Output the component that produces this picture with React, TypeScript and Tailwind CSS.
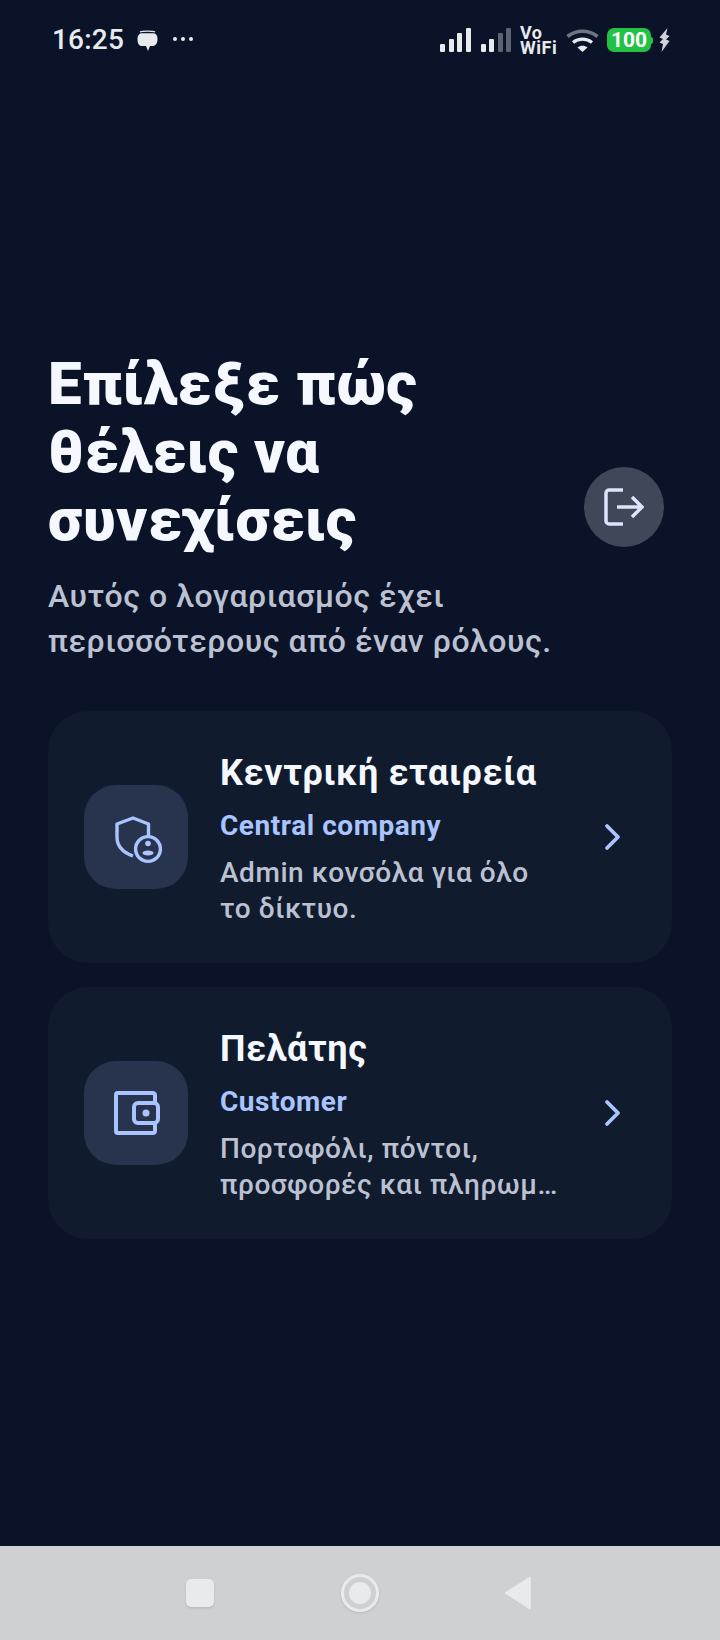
import React from 'react';

const ACCENT = '#a9c4ff';

const SignalBars = ({ dim = false }: { dim?: boolean }) => {
  const bars = [8, 13, 19, 24];
  return (
    <div className="flex items-end gap-[3.5px] h-[24px]">
      {bars.map((h, i) => (
        <div
          key={h}
          className={`w-[5px] rounded-[1px] ${dim && i > 1 ? 'bg-[#5b6270]' : 'bg-[#e8eaee]'}`}
          style={{ height: h }}
        />
      ))}
    </div>
  );
};

const StatusBar = () => (
  <div className="flex items-center justify-between h-[78px] pt-[2px] pl-[52px] pr-[50px] font-['Roboto',sans-serif] text-[#e8eaee]">
    <div className="flex items-center">
      <span className="text-[28px] leading-none font-medium tracking-[0.2px]">16:25</span>
      <svg width="21" height="21" viewBox="0 0 21 21" className="ml-[13px]">
        <path d="M3 2C5 .8 16 .8 18 2" fill="none" stroke="#e8eaee" strokeWidth="1.200" />
        <path d="M.5 9c0-4 2-5.800 4.500-5.800h11c3 0 4.500 2 4.500 5.800 0 4.500-2 7-5 7h-2.500L11 21l-2-5H5c-3 0-4.500-2.500-4.500-7z" fill="#e8eaee" />
      </svg>
      <div className="flex items-center gap-[4px] ml-[15px] mb-[2px]">
        <div className="w-[4px] h-[4px] rounded-full bg-[#e8eaee]" />
        <div className="w-[4px] h-[4px] rounded-full bg-[#e8eaee]" />
        <div className="w-[4px] h-[4px] rounded-full bg-[#e8eaee]" />
      </div>
    </div>
    <div className="flex items-center">
      <SignalBars />
      <div className="ml-[10px]">
        <SignalBars dim />
      </div>
      <div className="ml-[9px] w-[40px] text-[18px] leading-[15px] font-bold tracking-[0.5px]">
        <div>Vo</div>
        <div>WiFi</div>
      </div>
      <svg width="33" height="24" viewBox="0 0 33 24" className="ml-[6px]">
        <path d="M1.500 8.500C10 1.500 23 1.500 31.500 8.500" fill="none" stroke="#6f7683" strokeWidth="3.600" />
        <path d="M7 14.500C12.500 10 20.500 10 26 14.500" fill="none" stroke="#e8eaee" strokeWidth="3.200" />
        <path d="M11.500 19.500L16.500 24l5-4.500c-3-2.500-7-2.500-10 0z" fill="#e8eaee" />
      </svg>
      <div className="ml-[8px] flex items-center">
        <div className="w-[44px] h-[24px] rounded-[7px] bg-[#22c244] flex items-center justify-center text-white text-[21px] leading-none font-bold">
          100
        </div>
        <div className="w-[2px] h-[7px] rounded-r-[2px] bg-[#22c244]" />
      </div>
      <svg width="11" height="24" viewBox="0 0 11 24" className="ml-[6px]">
        <path d="M8.500 0L.5 9.500l3.500 1.500L.5 14.500l3.500 1.500L2.500 24l8-11-3.500-1.500L10.500 8 7 6.500z" fill="#cfd2d8" />
      </svg>
    </div>
  </div>
);

const RoleCard = ({
  icon,
  title,
  label,
  desc,
}: {
  icon: React.ReactNode;
  title: string;
  label: string;
  desc: string;
}) => (
  <div className="flex items-center h-[252px] rounded-[40px] bg-[#101b2d] pl-[36px] pr-[49px]">
    <div className="w-[104px] h-[104px] shrink-0 rounded-[32px] bg-[#28344e] flex items-center justify-center">
      {icon}
    </div>
    <div className="ml-[32px] flex-1 min-w-0 pt-[4px]">
      <div className="text-[36px] leading-[44px] font-bold text-[#f6f8ff] tracking-[0.6px]">{title}</div>
      <div className="mt-[13px] text-[28px] leading-[36px] font-bold text-[#a9c4ff] tracking-[0.55px]">{label}</div>
      <div className="mt-[11px] w-[340px] text-[28px] leading-[36px] font-medium text-[#bcc1d2] tracking-[0.55px]">
        {desc}
      </div>
    </div>
    <svg width="20" height="28" viewBox="0 0 20 28" fill="none">
      <path d="M4 3l11 11L4 25" stroke={ACCENT} strokeWidth="3.800" strokeLinecap="round" strokeLinejoin="round" />
    </svg>
  </div>
);

const ShieldIcon = () => (
  <svg width="48" height="48" viewBox="0 0 48 48" fill="none" className="ml-[5px] mt-[5px]">
    <path
      d="M33.500 20V8L18 2 2 8v13c0 9 6 15.500 16 19"
      stroke={ACCENT}
      strokeWidth="3.400"
      strokeLinejoin="round"
    />
    <circle cx="33" cy="33" r="12.400" fill="#28344e" stroke={ACCENT} strokeWidth="3.400" />
    <circle cx="33" cy="27.500" r="2.800" fill={ACCENT} />
    <ellipse cx="33" cy="37" rx="5.500" ry="2.500" fill={ACCENT} />
  </svg>
);

const WalletIcon = () => (
  <svg width="46" height="44" viewBox="0 0 46 44" fill="none" className="ml-[2px]">
    <path
      d="M41 12V4.500C41 3 40 2 38.500 2h-35C2.500 2 2 3 2 4v36c0 1 .5 2 1.500 2h35c1.500 0 2.500-1 2.500-2.500V32"
      stroke={ACCENT}
      strokeWidth="4"
    />
    <rect x="20" y="12" width="24" height="20" rx="4" stroke={ACCENT} strokeWidth="4" />
    <circle cx="32" cy="22" r="3.500" fill={ACCENT} />
  </svg>
);

export default function App() {
  return (
    <div className="w-[720px] h-[1640px] flex flex-col bg-[#0a1327] font-['Roboto',sans-serif]">
      <StatusBar />
      <div className="flex-1 pl-[48px] pr-[48px] pt-[272px]">
        <div className="flex items-end justify-between">
          <h1 className="text-[60px] leading-[68px] font-black text-[#f6f8ff] tracking-[0.6px]">
            Επίλεξε πώς
            <br />
            θέλεις να
            <br />
            συνεχίσεις
          </h1>
          <button className="w-[80px] h-[80px] mr-[8px] mb-[7px] rounded-full bg-[#3f4859] flex items-center justify-center">
            <svg width="40" height="38" viewBox="0 0 40 38" fill="none">
              <path d="M19 2H5C3.500 2 2 3.500 2 5v28c0 1.500 1.500 3 3 3h14" stroke="#dbe4fb" strokeWidth="3.500" />
              <path d="M13 19h24M28 9l10 10-10 10" stroke="#dbe4fb" strokeWidth="3.500" />
            </svg>
          </button>
        </div>
        <p className="mt-[20px] text-[32px] leading-[45px] font-medium text-[#bcc1d2] tracking-[0.55px]">
          Αυτός ο λογαριασμός έχει
          <br />
          περισσότερους από έναν ρόλους.
        </p>
        <div className="mt-[47px] flex flex-col gap-[24px]">
          <RoleCard
            icon={<ShieldIcon />}
            title="Κεντρική εταιρεία"
            label="Central company"
            desc="Admin κονσόλα για όλο το δίκτυο."
          />
          <RoleCard
            icon={<WalletIcon />}
            title="Πελάτης"
            label="Customer"
            desc="Πορτοφόλι, πόντοι, προσφορές και πληρωμ…"
          />
        </div>
      </div>
      <div className="h-[94px] bg-[#cfd0d4] flex items-center justify-between pl-[186px] pr-[188px]">
        <div className="w-[28px] h-[28px] rounded-[5px] bg-[#e9eaec] shadow-sm" />
        <div className="w-[38px] h-[38px] ml-[2px] rounded-full border-[3px] border-[#e9eaec] flex items-center justify-center shadow-sm">
          <div className="w-[22px] h-[22px] rounded-full bg-[#e9eaec]" />
        </div>
        <svg width="28" height="34" viewBox="0 0 28 34">
          <path d="M26 1.500v31L1.500 17z" fill="#e9eaec" stroke="#e9eaec" strokeWidth="1.500" strokeLinejoin="round" />
        </svg>
      </div>
    </div>
  );
}
